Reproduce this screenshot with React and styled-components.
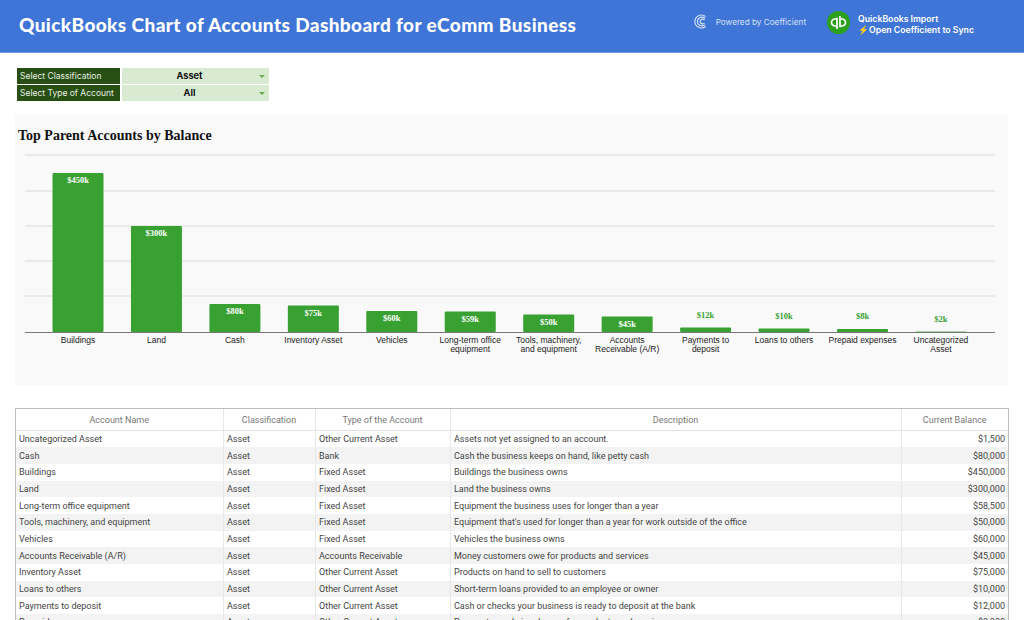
import React from "react";
import styled, { createGlobalStyle } from "styled-components";

const GlobalStyle = createGlobalStyle`
  html, body {
    margin: 0;
    padding: 0;
    height: 620px;
    overflow: hidden;
    background: #fff;
  }
`;

const Page = styled.div`
  width: 1024px;
  height: 620px;
  overflow: hidden;
`;

const Header = styled.header`
  height: 53px;
  display: flex;
  align-items: center;
  padding: 0 50px 3px 19px;
  box-sizing: border-box;
  background: #3f75d6;
  border-bottom: 1px solid #6b95e0;
  color: #fff;
`;

const Title = styled.h1`
  flex: 1;
  margin: 0;
  font: 900 19px "Lato", sans-serif;
  letter-spacing: 0.39px;
`;

const Powered = styled.div`
  display: flex;
  align-items: center;
  gap: 9px;
  margin: 0 21px 6px 0;
  color: #d5e0f5;
  font: 400 8.2px "Inter", sans-serif;
`;

const Import = styled.div`
  display: flex;
  align-items: center;
  gap: 8px;
`;

const ImportText = styled.div`
  font: 600 8.7px/11px "Inter", sans-serif;
`;

const Filters = styled.div`
  display: grid;
  grid-template-columns: 103px 147px;
  gap: 1px 2px;
  margin: 15px 0 14px 17px;
`;

const FilterLabel = styled.div`
  height: 16px;
  padding-left: 3px;
  background: #274e13;
  color: #e8efe4;
  font: 400 8.5px/16px "Inter", sans-serif;
`;

const FilterValue = styled.div`
  position: relative;
  height: 16px;
  padding-right: 12px;
  background-color: #d9ead3;
  background-image: radial-gradient(#c6dcbe 0.5px, transparent 0.6px);
  background-size: 4px 4px;
  color: #111;
  text-align: center;
  font: 700 9.2px/16px "Inter", sans-serif;

  &::after {
    content: "";
    position: absolute;
    right: 4px;
    top: 7px;
    border: 3px solid transparent;
    border-top: 3px solid #6aa84f;
    border-bottom: 0;
  }
`;

const ChartPanel = styled.section`
  height: 270px;
  margin: 0 16px 23px 15px;
  background: #f9f9f9;
`;

const ChartTitle = styled.h2`
  margin: 0;
  padding: 13px 0 0 3px;
  height: 28px;
  box-sizing: border-box;
  font: 700 14px "Liberation Serif", serif;
  color: #111;
`;

const ChartSvg = styled.svg`
  display: block;
`;

const BarValue = styled.text`
  font: 700 8.5px "Liberation Serif", serif;
  text-anchor: middle;
  fill: ${(p) => (p.$inside ? "#fff" : "#38a132")};
`;

const BarLabel = styled.text`
  font: 400 8.5px "Liberation Sans", sans-serif;
  text-anchor: middle;
  fill: #222;
`;

const TableWrap = styled.div`
  margin: 0 15px;
  border: 1px solid #bdbdbd;
  border-bottom: 0;
`;

const Table = styled.table`
  width: 100%;
  table-layout: fixed;
  border-collapse: collapse;
  font: 400 9px "Roboto", sans-serif;
  color: #444;
`;

const Th = styled.th`
  height: 21px;
  padding: 0;
  font-weight: 400;
  color: #777;
  border-bottom: 1px solid #e2e2e2;
  border-right: 1px solid #e8e8e8;
  &:last-child { border-right: 0; }
`;

const Row = styled.tr`
  height: 16.7px;
  background: ${(p) => (p.$odd ? "#f3f3f3" : "#fff")};
`;

const Td = styled.td`
  padding: 0 3px 0 3.5px;
  line-height: 16px;
  white-space: nowrap;
  overflow: hidden;
  text-align: ${(p) => (p.$right ? "right" : "left")};
  border-right: 1px solid #e8e8e8;
  &:first-child { padding-left: 3px; }
  &:last-child { border-right: 0; }
`;

const bars = [
  { name: ["Buildings"], value: "$450k", h: 159 },
  { name: ["Land"], value: "$300k", h: 106 },
  { name: ["Cash"], value: "$80k", h: 28 },
  { name: ["Inventory Asset"], value: "$75k", h: 26.5 },
  { name: ["Vehicles"], value: "$60k", h: 21 },
  { name: ["Long-term office", "equipment"], value: "$59k", h: 20.5 },
  { name: ["Tools, machinery,", "and equipment"], value: "$50k", h: 17.5 },
  { name: ["Accounts", "Receivable (A/R)"], value: "$45k", h: 15.5 },
  { name: ["Payments to", "deposit"], value: "$12k", h: 4.5 },
  { name: ["Loans to others"], value: "$10k", h: 3.5 },
  { name: ["Prepaid expenses"], value: "$8k", h: 3 },
  { name: ["Uncategorized", "Asset"], value: "$2k", h: 1, dy: 1 },
];

const rows = [
  ["Uncategorized Asset", "Other Current Asset", "Assets not yet assigned to an account.", "$1,500"],
  ["Cash", "Bank", "Cash the business keeps on hand, like petty cash", "$80,000"],
  ["Buildings", "Fixed Asset", "Buildings the business owns", "$450,000"],
  ["Land", "Fixed Asset", "Land the business owns", "$300,000"],
  ["Long-term office equipment", "Fixed Asset", "Equipment the business uses for longer than a year", "$58,500"],
  ["Tools, machinery, and equipment", "Fixed Asset", "Equipment that's used for longer than a year for work outside of the office", "$50,000"],
  ["Vehicles", "Fixed Asset", "Vehicles the business owns", "$60,000"],
  ["Accounts Receivable (A/R)", "Accounts Receivable", "Money customers owe for products and services", "$45,000"],
  ["Inventory Asset", "Other Current Asset", "Products on hand to sell to customers", "$75,000"],
  ["Loans to others", "Other Current Asset", "Short-term loans provided to an employee or owner", "$10,000"],
  ["Payments to deposit", "Other Current Asset", "Cash or checks your business is ready to deposit at the bank", "$12,000"],
  ["Prepaid expenses", "Other Current Asset", "Payments made in advance for products and services", "$8,000"],
];

const BASE = 189;

const Chart = () => (
  <ChartSvg width="993" height="242" viewBox="0 0 993 242">
    {[12, 48, 83, 118, 153].map((y) => (
      <line key={y} x1="10" x2="980" y1={y} y2={y} stroke="#d9d9d9" />
    ))}
    <line x1="10" x2="980" y1={BASE + 0.5} y2={BASE + 0.5} stroke="#777" />
    {bars.map((b, i) => {
      const cx = 63 + i * 78.45;
      const inside = b.h > 10;
      return (
        <g key={b.value}>
          <rect
            x={cx - 25.5}
            y={BASE - b.h}
            width="51"
            height={b.h}
            rx="1"
            fill={b.h <= 1 ? "#a8d8a4" : "#38a132"}
          />
          <BarValue
            $inside={inside}
            x={cx}
            y={(inside ? BASE - b.h + 10 : BASE - b.h - 10) + (b.dy || 0)}
          >
            {b.value}
          </BarValue>
          <BarLabel x={cx}>
            {b.name.map((line, n) => (
              <tspan key={line} x={cx} y={BASE + 11 + n * 9}>
                {line}
              </tspan>
            ))}
          </BarLabel>
        </g>
      );
    })}
  </ChartSvg>
);

const CoefficientMark = () => (
  <svg width="13" height="15" viewBox="0 0 13 15" fill="none" stroke="#dbe5f7" strokeWidth="1.1">
    <path d="M11.5 2.5A6.5 6.5 0 1 0 11.5 12.5" />
    <path d="M11 4.4A4.4 4.4 0 1 0 11 10.6" />
    <path d="M10.5 6A2.4 2.4 0 1 0 10.5 9" />
  </svg>
);

const QbSvg = styled.svg`
  margin-bottom: 5px;
`;

const QbLogo = () => (
  <QbSvg width="23" height="23" viewBox="0 0 23 23">
    <circle cx="11.5" cy="11.5" r="11.5" fill="#2ca01c" />
    <g fill="none" stroke="#fff" strokeWidth="1.7">
      <path d="M10 18V6.8M10 8H8a3.5 3.5 0 0 0 0 7h1" />
      <path d="M13 5V16.2M13 15H15a3.5 3.5 0 0 0 0-7h-1" />
    </g>
  </QbSvg>
);

export default function App() {
  return (
    <Page>
      <GlobalStyle />
      <Header>
        <Title>QuickBooks Chart of Accounts Dashboard for eComm Business</Title>
        <Powered>
          <CoefficientMark />
          Powered by Coefficient
        </Powered>
        <Import>
          <QbLogo />
          <ImportText>
            QuickBooks Import
            <br />
            ⚡Open Coefficient to Sync
          </ImportText>
        </Import>
      </Header>
      <Filters>
        <FilterLabel>Select Classification</FilterLabel>
        <FilterValue>Asset</FilterValue>
        <FilterLabel>Select Type of Account</FilterLabel>
        <FilterValue>All</FilterValue>
      </Filters>
      <ChartPanel>
        <ChartTitle>Top Parent Accounts by Balance</ChartTitle>
        <Chart />
      </ChartPanel>
      <TableWrap>
        <Table>
          <colgroup>
            <col width="207" />
            <col width="92" />
            <col width="135" />
            <col width="451" />
            <col />
          </colgroup>
          <thead>
            <tr>
              <Th>Account Name</Th>
              <Th>Classification</Th>
              <Th>Type of the Account</Th>
              <Th>Description</Th>
              <Th>Current Balance</Th>
            </tr>
          </thead>
          <tbody>
            {rows.map((r, i) => (
              <Row key={r[0]} $odd={i % 2 === 1}>
                <Td>{r[0]}</Td>
                <Td>Asset</Td>
                <Td>{r[1]}</Td>
                <Td>{r[2]}</Td>
                <Td $right>{r[3]}</Td>
              </Row>
            ))}
          </tbody>
        </Table>
      </TableWrap>
    </Page>
  );
}
